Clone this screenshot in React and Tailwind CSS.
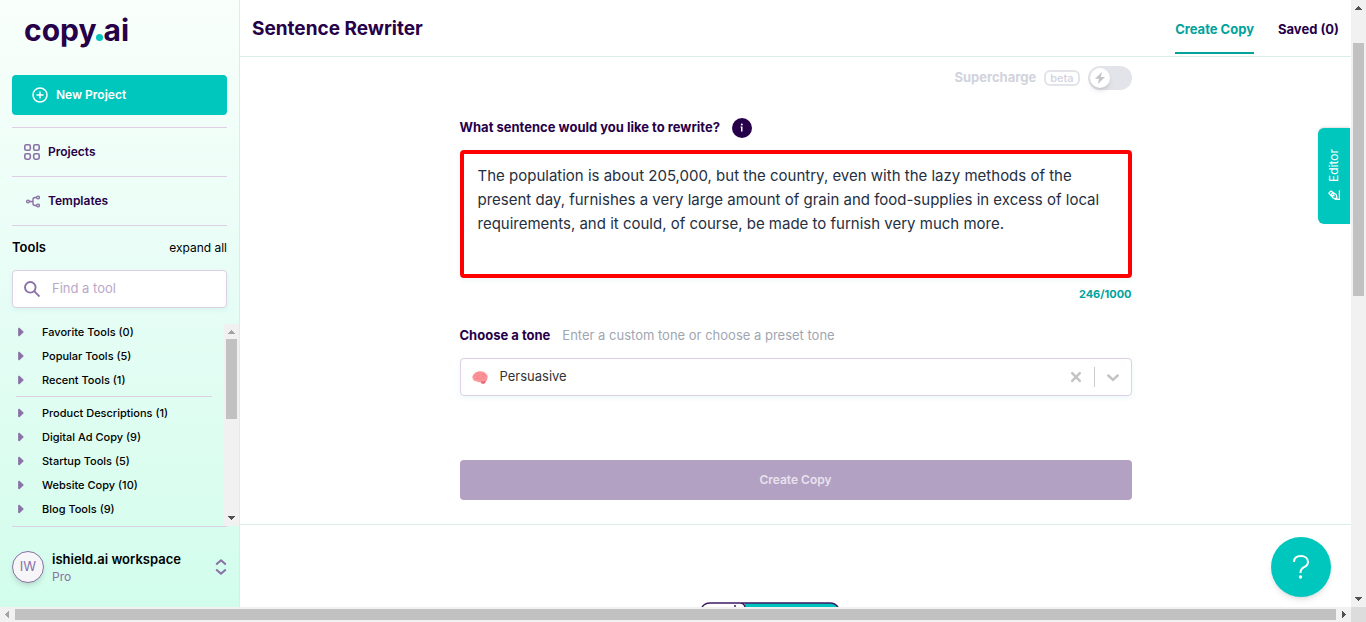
import React from "react";

const recentGroups = ["Favorite Tools (0)", "Popular Tools (5)", "Recent Tools (1)"];
const toolGroups = [
  "Product Descriptions (1)",
  "Digital Ad Copy (9)",
  "Startup Tools (5)",
  "Website Copy (10)",
  "Blog Tools (9)",
];

const sentence =
  "The population is about 205,000, but the country, even with the lazy methods of the present day, furnishes a very large amount of grain and food-supplies in excess of local requirements, and it could, of course, be made to furnish very much more.";

function PlusCircle() {
  return (
    <svg className="size-4" viewBox="0 0 16 16" fill="none" stroke="currentColor" strokeWidth="1.5" strokeLinecap="round" aria-hidden="true">
      <circle cx="8" cy="8" r="7" />
      <path d="M8 5v6M5 8h6" />
    </svg>
  );
}

function GridIcon() {
  return (
    <svg className="size-4" viewBox="0 0 16 16" fill="none" stroke="currentColor" strokeWidth="1.6" aria-hidden="true">
      <rect x="0.8" y="0.8" width="5.5" height="5.5" rx="1.6" />
      <rect x="9.7" y="0.8" width="5.5" height="5.5" rx="1.6" />
      <rect x="0.8" y="9.7" width="5.5" height="5.5" rx="1.6" />
      <rect x="9.7" y="9.7" width="5.5" height="5.5" rx="1.6" />
    </svg>
  );
}

function BranchIcon() {
  return (
    <svg className="size-4" viewBox="0 0 16 16" fill="none" stroke="currentColor" strokeWidth="1.4" aria-hidden="true">
      <circle cx="4" cy="8.5" r="1.4" />
      <circle cx="14" cy="4.5" r="1.4" />
      <circle cx="14" cy="12.5" r="1.4" />
      <path d="M5.4 8.5H9M12.6 4.5H11Q9 4.5 9 6.5V10.5Q9 12.5 11 12.5H12.6" />
    </svg>
  );
}

function SearchIcon() {
  return (
    <svg className="size-4 shrink-0" viewBox="0 0 16 16" fill="none" stroke="currentColor" strokeWidth="1.9" aria-hidden="true">
      <circle cx="6.3" cy="6.3" r="5.3" />
      <path d="M10.2 10.2L15.5 15.5" />
    </svg>
  );
}

function Caret() {
  return (
    <svg className="h-2.5 w-1.5" viewBox="0 0 6 10" fill="currentColor" stroke="currentColor" strokeLinejoin="round" aria-hidden="true">
      <path d="M0.7 1.2L1.5 1.2L5.3 5L1.5 8.8L0.7 8.8Z" />
    </svg>
  );
}

function UpDownIcon() {
  return (
    <svg className="h-4 w-3" viewBox="0 0 12 16" fill="none" stroke="currentColor" strokeWidth="2" strokeLinejoin="round" aria-hidden="true">
      <path d="M1.2 5.5L6 1.2L10.8 5.5M1.2 10.5L6 14.8L10.8 10.5" />
    </svg>
  );
}

function BoltIcon() {
  return (
    <svg className="h-3 w-3" viewBox="0 0 12 12" fill="currentColor" aria-hidden="true">
      <path d="M8 0L1 6.7H5L3.9 12L11 5.1H6.8Z" />
    </svg>
  );
}

function BrainIcon() {
  return (
    <svg className="h-[13px] w-4" viewBox="0 0 16 13" aria-hidden="true">
      <path d="M0.5 7C0 5 1 4 2 3C3 1.3 4.500 1 5.500 0.800C7 0 8.500 0.300 9.500 0.500C11.500 0.300 13 1.300 13.700 2.500C15.500 3.500 16 5.500 15.500 7C15.600 9 14.500 10 13.700 10.300C13.500 12 12.500 12.800 10.500 12.600C9.500 12.500 9 12 8.500 11.300C7 11.500 5.500 11.200 4.500 10.300C2.500 10.500 1 9 0.500 7Z" fill="#fc9599" />
      <path d="M9 10.500C11 11 13 9.600 13.700 10.300C13.500 12 12.500 12.800 10.500 12.600C9.500 12.600 9 11.500 9 10.500Z" fill="#e5697a" />
      <path d="M2 5.500Q3.500 3.500 5 5T7.500 4M3 8Q5 6.500 7 7.500T10 7M9 2.500Q10 4 11.500 3.500T13.500 5.500M10 5Q12 6 12 8M5 2.800Q6.500 2 7.500 2.800" fill="none" stroke="#ef7683" strokeWidth="0.600" />
    </svg>
  );
}

function PencilIcon() {
  return (
    <svg className="size-3" viewBox="0 0 12 12" fill="none" stroke="currentColor" strokeWidth="1.2" strokeLinejoin="round" aria-hidden="true">
      <path d="M0.800 3.200L3 1L8.300 4.800L9 8.700L5.200 8.200ZM5 2.500L2.800 5L5.200 8.200M5 2.500L6 6L2.800 5M11.400 0.500V9.400H6.500" />
    </svg>
  );
}

function Arrow({ d, className }) {
  return (
    <svg className={`size-[15px] shrink-0 ${className}`} viewBox="0 0 15 15" fill="currentColor" shapeRendering="crispEdges" aria-hidden="true">
      <path d={d} />
    </svg>
  );
}

const UP = "M4 10L7.500 6L11 10Z";
const DOWN = "M4 5L7.500 9L11 5Z";
const LEFT = "M9 4L5 7.500L9 11Z";
const RIGHT = "M6 4L10 7.500L6 11Z";

function ToolRow({ label }) {
  return (
    <li>
      <button type="button" className="flex h-4 items-center pl-1.5 text-[11px] font-medium text-black">
        <span className="flex w-6 text-[#8a70a6]"><Caret /></span>
        {label}
      </button>
    </li>
  );
}

function Sidebar() {
  return (
    <aside className="flex w-60 shrink-0 flex-col border-r border-[#d9efe3] bg-linear-to-b from-[#f9fffb] via-[#e6fdf5] to-[#d2fdec] pl-3">
      <div className="flex h-[75px] items-start pl-3 pt-2">
        <a href="#home" className="flex items-baseline text-[30px] leading-11 font-bold text-[#260048]">
          copy
          <span className="size-[7px] rounded-full bg-[#00c4bd]" />
          ai
        </a>
      </div>
      <div className="flex flex-col pr-3">
        <button type="button" className="flex h-10 items-center gap-2 rounded bg-[#00c7be] pl-5 text-xs font-semibold text-white">
          <PlusCircle />
          New Project
        </button>
        <nav className="mt-3 text-xs font-semibold text-[#260048]">
          <a href="#projects" className="flex h-[49px] items-center gap-2 border-t border-[#dccfe6] pl-3">
            <span className="text-[#8a70a6]"><GridIcon /></span>
            Projects
          </a>
          <a href="#templates" className="flex h-[49px] items-center gap-2 border-t border-[#dccfe6] pl-3">
            <span className="text-[#8a70a6]"><BranchIcon /></span>
            Templates
          </a>
        </nav>
        <div className="flex h-[45px] items-center justify-between border-t border-[#dccfe6] text-black">
          <h2 className="text-[13px] font-semibold">Tools</h2>
          <button type="button" className="text-xs">expand all</button>
        </div>
        <label className="flex h-[38px] items-center gap-3 rounded border border-[#dccfe6] bg-white pl-[11px] text-[#8a70a6] shadow-[0_2px_4px_#00a39b14]">
          <SearchIcon />
          <input type="search" aria-label="Find a tool" placeholder="Find a tool" className="min-w-0 flex-1 bg-transparent text-[13px] outline-none placeholder:text-[#b9a8c8]" />
        </label>
      </div>
      <div className="mt-4 flex min-h-0 flex-1">
        <div className="flex min-w-0 flex-1 flex-col gap-2 overflow-hidden">
          <ul className="flex flex-col gap-2">
            {recentGroups.map((label) => <ToolRow key={label} label={label} />)}
          </ul>
          <hr className="ml-1 mr-3 border-[#dccfe6]" />
          <ul className="flex flex-col gap-2">
            {toolGroups.map((label) => <ToolRow key={label} label={label} />)}
          </ul>
        </div>
        <div className="flex w-[15px] flex-col items-center bg-[#f1f1f1]">
          <Arrow d={UP} className="text-[#a3a3a3]" />
          <div className="h-20 w-[11px] bg-[#c1c1c1]" />
          <Arrow d={DOWN} className="mt-auto text-[#505050]" />
        </div>
      </div>
      <div className="mr-3 flex h-[81px] items-center border-t border-[#dccfe6]">
        <span className="flex size-8 items-center justify-center rounded-full border border-[#8a70a6] bg-[#f6f6f9] text-[13px] text-[#8a70a6] shadow-md">IW</span>
        <div className="ml-2 flex-1">
          <p className="text-[13px] leading-5 font-semibold text-black">ishield.ai workspace</p>
          <p className="text-xs text-[#8a70a6]">Pro</p>
        </div>
        <button type="button" aria-label="Switch workspace" className="text-[#8a70a6]"><UpDownIcon /></button>
      </div>
    </aside>
  );
}

function RewriteForm() {
  return (
    <form className="mx-auto flex w-full max-w-2xl flex-col pt-[9px] pb-6">
      <label className="flex h-6 items-center justify-end gap-2 text-[13px] font-bold text-[#d1d3dc]">
        Supercharge
        <span className="flex h-4 items-center rounded-md border-2 border-[#e3e4ea] px-1 text-[11px] font-medium">beta</span>
        <input type="checkbox" className="sr-only" />
        <span className="flex h-6 w-11 items-center rounded-full bg-[#e3e4ea] px-0.5">
          <span className="flex size-5 items-center justify-center rounded-full bg-white text-[#c4c4c8] shadow-md"><BoltIcon /></span>
        </span>
      </label>
      <div className="mt-7 flex h-5 items-center gap-3">
        <label htmlFor="sentence" className="text-[13px] font-bold text-[#260048]">What sentence would you like to rewrite?</label>
        <button type="button" aria-label="More information" className="flex size-5 items-center justify-center rounded-full bg-[#260048] text-white">
          <svg className="size-5" viewBox="0 0 20 20" fill="currentColor" aria-hidden="true">
            <circle cx="9.800" cy="6.500" r="1" />
            <path d="M8.500 8.500H10.500V13.500H9V9.500H8.500Z" />
          </svg>
        </button>
      </div>
      <textarea id="sentence" defaultValue={sentence} className="mt-3 h-32 w-full resize-none overflow-hidden rounded border-4 border-[#ff0000] px-3.5 py-2.5 text-[15px] leading-6 text-[#252f3f] shadow-[0_2px_6px_#00a39b14] outline-none" />
      <p className="mt-2 text-right text-[11px] leading-4 font-bold text-[#00a39b]">246/1000</p>
      <div className="mt-6 flex h-5 items-center gap-3 text-[13px]">
        <label htmlFor="tone" className="font-bold text-[#260048]">Choose a tone</label>
        <span className="text-[#9fa6b2]">Enter a custom tone or choose a preset tone</span>
      </div>
      <div className="mt-3 flex h-[38px] items-center rounded border border-[#dccfe6] bg-white pl-[11px] shadow-[0_2px_6px_#00a39b14]">
        <BrainIcon />
        <select id="tone" defaultValue="Persuasive" className="ml-3 min-w-0 flex-1 appearance-none bg-transparent text-[13px] text-[#333333] outline-none">
          <option>Persuasive</option>
          <option>Friendly</option>
        </select>
        <button type="button" aria-label="Clear tone" className="flex size-9 items-center justify-center text-[#c4c4c4]">
          <svg className="size-3" viewBox="0 0 12 12" fill="none" stroke="currentColor" strokeWidth="2.5" strokeLinecap="round"><path d="M2.200 2.200L9.800 9.800M9.800 2.200L2.200 9.800" /></svg>
        </button>
        <span className="h-5 w-px bg-[#cccccc]" />
        <button type="button" aria-label="Show tones" className="flex size-9 items-center justify-center text-[#c4c4c4]">
          <svg className="size-3" viewBox="0 0 12 12" fill="none" stroke="currentColor" strokeWidth="2.5" strokeLinecap="round"><path d="M1.300 4.500L6 8.800L10.700 4.500" /></svg>
        </button>
      </div>
      <button type="submit" className="mt-16 h-10 rounded bg-[#b3a1c4] text-xs font-semibold text-[#e8e2ee]">Create Copy</button>
    </form>
  );
}

export default function App() {
  return (
    <div className="flex h-screen flex-col overflow-hidden bg-white font-['Inter','Liberation_Sans',sans-serif]">
      <div className="relative flex min-h-0 flex-1">
        <Sidebar />
        <div className="flex min-w-0 flex-1 flex-col">
          <header className="flex h-[57px] shrink-0 items-start justify-between border-b border-[#d9efe3] px-3">
            <h1 className="text-[19px] leading-[58px] font-bold text-[#260048]">Sentence Rewriter</h1>
            <nav className="flex gap-6 text-[13px] leading-[58px] font-bold">
              <a href="#create" className="h-[54px] border-b-2 border-[#00a39b] text-[#00a39b]">Create Copy</a>
              <a href="#saved" className="text-[#260048]">Saved (0)</a>
            </nav>
          </header>
          <main className="flex min-h-0 flex-1 flex-col">
            <section className="border-b border-[#d9efe3]"><RewriteForm /></section>
            <div className="flex min-h-0 flex-1 items-end justify-center overflow-hidden">
              <svg className="mr-[52px] h-[5px] w-[138px]" viewBox="0 0 138 5" fill="none" aria-hidden="true">
                <path d="M44 1H130Q134 1 137 5H44Z" fill="#00c4bd" />
                <path d="M1 5Q4 1 9 1H129Q134 1 137 5M39 1Q43 1 44 5M34 3V5" stroke="#3d1b66" strokeWidth="1.500" />
              </svg>
            </div>
          </main>
        </div>
        <div className="flex w-[15px] shrink-0 flex-col items-center bg-[#f1f1f1]">
          <Arrow d={UP} className="text-[#505050]" />
          <div className="mt-7 h-[253px] w-[11px] bg-[#c1c1c1]" />
          <Arrow d={DOWN} className="mt-auto text-[#505050]" />
        </div>
        <button type="button" className="absolute top-32 right-4 flex h-24 w-8 rotate-180 items-center justify-center gap-2 rounded-r-md bg-[#00c7be] text-xs text-white shadow-sm [writing-mode:vertical-rl]">
          <span className="rotate-180"><PencilIcon /></span>
          Editor
        </button>
        <button type="button" aria-label="Help" className="absolute right-[35px] bottom-2.5 flex size-15 items-center justify-center rounded-full bg-[#00c7be] text-white shadow-md">
          <svg className="h-6 w-4" viewBox="0 0 16 24" fill="none" stroke="currentColor" strokeWidth="2" aria-hidden="true">
            <path d="M1 7C1 3 4 1 8 1S15 3.500 15 7C15 9.500 13.500 11 11 12.200C8.500 13.500 7.500 14.500 7.500 18" />
            <circle cx="7.500" cy="22" r="1.700" fill="currentColor" stroke="none" />
          </svg>
        </button>
      </div>
      <div className="flex h-[15px] shrink-0 items-center bg-[#f1f1f1]">
        <Arrow d={LEFT} className="text-[#a3a3a3]" />
        <div className="h-[11px] flex-1 bg-[#c1c1c1]" />
        <Arrow d={RIGHT} className="text-[#505050]" />
        <div className="size-[15px] bg-[#dcdcdc]" />
      </div>
    </div>
  );
}
